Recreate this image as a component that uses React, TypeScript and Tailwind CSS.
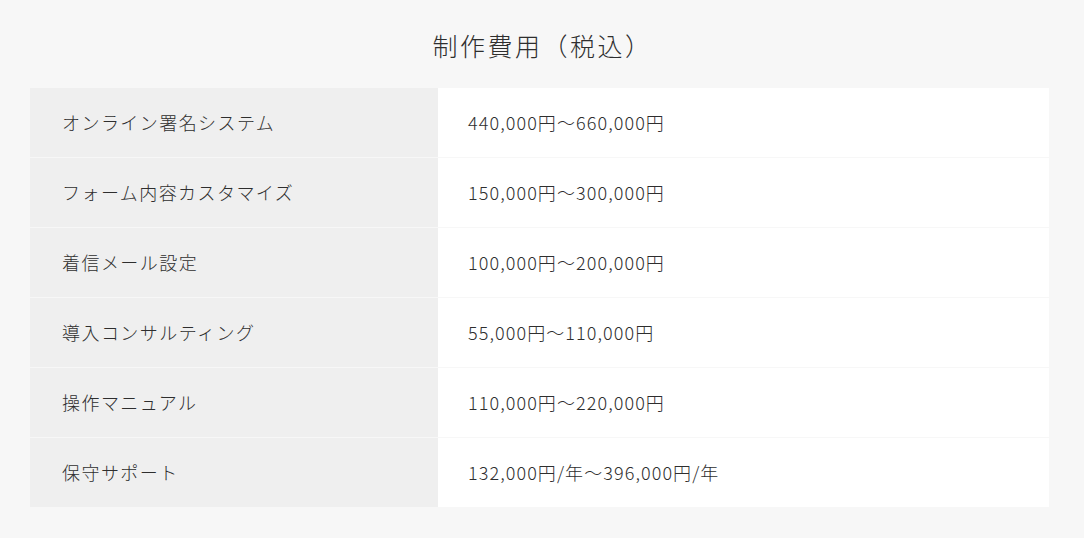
export default function App() {
  const rows = [
    { name: "オンライン署名システム", price: "440,000円～660,000円" },
    { name: "フォーム内容カスタマイズ", price: "150,000円～300,000円" },
    { name: "着信メール設定", price: "100,000円～200,000円" },
    { name: "導入コンサルティング", price: "55,000円～110,000円" },
    { name: "操作マニュアル", price: "110,000円～220,000円" },
    { name: "保守サポート", price: "132,000円/年～396,000円/年" },
  ];

  return (
    <div
      className="w-full min-h-[538px] bg-[#f7f7f7] text-[#2e2e2e] pt-[27px] px-[30px] pr-[35px]"
      style={{ fontFamily: '"Noto Sans CJK JP", "Noto Sans", sans-serif' }}
    >
      <h2 className="text-center text-[25px] leading-[36px] font-light tracking-[0.1em] pl-[6px]">
        制作費用（税込）
      </h2>
      <div className="mt-[25px] flex flex-col gap-px">
        {rows.map((row) => (
          <div key={row.name} className="flex h-[69px]">
            <div className="w-[408px] bg-[#efefef] flex items-center pl-[32px] text-[18px] font-light tracking-[0.08em]">
              {row.name}
            </div>
            <div className="flex-1 bg-white flex items-center pl-[30px] text-[18px] font-light tracking-[0.06em]">
              {row.price}
            </div>
          </div>
        ))}
      </div>
    </div>
  );
}
